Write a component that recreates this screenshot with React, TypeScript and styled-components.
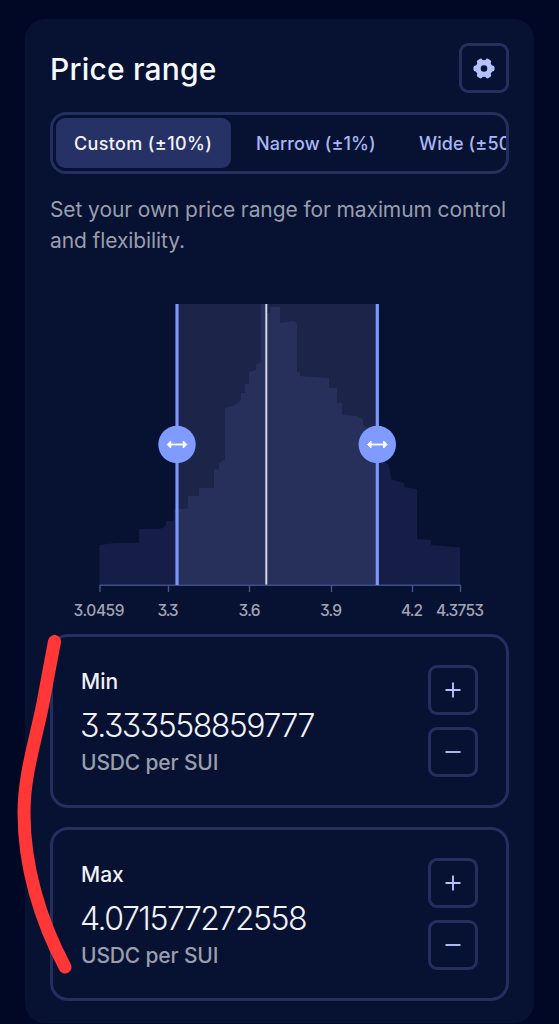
import styled, { createGlobalStyle } from "styled-components";

interface RangeFieldProps {
  label: string;
  value: string;
  unit: string;
}

interface Tick {
  x: number;
  labelX: number;
  label: string;
  width: number;
}

const GlobalStyle = createGlobalStyle`
  * {
    box-sizing: border-box;
  }

  body {
    margin: 0;
    background: #010825;
    font-family: Inter, "Open Sans", sans-serif;
    font-feature-settings: "cv09" 1;
  }
`;

const Page = styled.main`
  position: relative;
  width: 559px;
  height: 1024px;
  padding: 19px 25px 0;
  overflow: hidden;
`;

const Card = styled.section`
  display: flex;
  flex-direction: column;
  width: 509px;
  height: 1004px;
  padding: 24px 25px;
  border-radius: 20px;
  background: #071131;
`;

const Header = styled.header`
  display: flex;
  justify-content: space-between;
  align-items: center;
  height: 50px;
`;

const Title = styled.h2`
  margin: 0;
  padding-top: 2px;
  color: #f8f8ff;
  font-size: 30px;
  line-height: 40px;
  font-weight: 500;
  letter-spacing: 0.2px;
`;

const IconButton = styled.button`
  display: flex;
  justify-content: center;
  align-items: center;
  width: 50px;
  height: 50px;
  padding: 0;
  border: 3px solid #252f5f;
  border-radius: 9px;
  background: transparent;
  color: #b4c1fc;
`;

const Tabs = styled.div`
  display: flex;
  flex-shrink: 0;
  gap: 7px;
  height: 62px;
  margin-top: 19px;
  padding: 3px;
  border: 3px solid #252f5f;
  border-radius: 16px;
  overflow: hidden;
`;

const Tab = styled.button<{ $active?: boolean; $width: number }>`
  flex: 0 0 ${({ $width }) => $width}px;
  height: 50px;
  padding: 0 0 0 18px;
  border: 0;
  border-radius: 9px;
  background: ${({ $active }) => ($active ? "#263265" : "transparent")};
  color: ${({ $active }) => ($active ? "#f2f3ff" : "#a9b7f5")};
  font: 500 18px Inter, sans-serif;
  letter-spacing: ${({ $active }) => ($active ? 0.35 : 0.1)}px;
  text-align: left;
  white-space: nowrap;
`;

const Description = styled.p`
  flex-shrink: 0;
  height: 62px;
  margin: 20px 0 0;
  color: #9a9eae;
  font-size: 21px;
  line-height: 31px;
  font-weight: 400;
  letter-spacing: -0.1px;
  white-space: nowrap;
`;

const Chart = styled.svg`
  display: block;
  flex-shrink: 0;
  width: 459px;
  height: 335px;
  margin-top: 39px;
  overflow: visible;
`;

const AxisLabel = styled.text`
  fill: #a2a5b7;
  font-size: 15.5px;
  font-weight: 500;
`;

const Fields = styled.div`
  display: flex;
  flex-direction: column;
  gap: 19px;
  margin-top: 4px;
`;

const Field = styled.div`
  display: flex;
  justify-content: space-between;
  height: 174px;
  padding: 28px;
  border: 3px solid #252f5f;
  border-radius: 18px;
`;

const FieldText = styled.div`
  display: flex;
  flex-direction: column;
  white-space: nowrap;
`;

const FieldLabel = styled.span`
  height: 34px;
  color: #f1f2fa;
  font-size: 21px;
  line-height: 34px;
  font-weight: 500;
`;

const FieldValue = styled.span`
  height: 52px;
  margin-left: -1px;
  color: #f1f2fa;
  font-size: 32px;
  line-height: 54px;
  font-weight: 300;
  letter-spacing: -1.5px;
`;

const FieldUnit = styled.span`
  height: 24px;
  color: #9a9eae;
  font-size: 21px;
  line-height: 24px;
  font-weight: 500;
  letter-spacing: -0.15px;
`;

const Steppers = styled.div`
  display: flex;
  flex-direction: column;
  gap: 12px;
`;

const Marker = styled.svg`
  position: absolute;
  left: 0;
  top: 620px;
  width: 90px;
  height: 370px;
`;

const histogram =
  "M49.5 290V250L65 248H89V234L107 234L113 233L116 230V226H124V215L128 214H134L138 213V201H149V193H164V175L169 174V168L175 164V113L183 111L188 108L191 105V98H195V89H199V77L206 75V70L211 67V9H217V18H220V12H230V28L244 26L247 29V77H250V81L279 83V93H287V108H292V120L307 121L313 124V130L321 135L327 150L330 165L336 168L339 170L341 184L346 186L354 188V192L367 194V244L381 245V250L410 252.5V290Z";

const ticks: Tick[] = [
  { x: 50, labelX: 49, label: "3.0459", width: 51 },
  { x: 118.5, labelX: 118, label: "3.3", width: 21 },
  { x: 199.5, labelX: 199.5, label: "3.6", width: 22 },
  { x: 281.5, labelX: 281, label: "3.9", width: 22 },
  { x: 362.5, labelX: 362, label: "4.2", width: 22 },
  { x: 410.5, labelX: 410, label: "4.3753", width: 48 },
];

const Handle = ({ x }: { x: number }) => (
  <g transform={`translate(${x} 0)`}>
    <path d="M0 9V290" stroke="#7d98f8" strokeWidth="3.2" />
    <circle cy="149.5" r="18.7" fill="#7f9bff" />
    <path d="M-8 149.5H8" stroke="white" strokeWidth="1.8" />
    <path
      d="M-6.3 146L-9.8 149.5L-6.3 153ZM6.3 146L9.8 149.5L6.3 153Z"
      fill="white"
      stroke="white"
      strokeWidth="1"
      strokeLinejoin="round"
    />
  </g>
);

const PriceChart = () => (
  <Chart viewBox="0 0 459 335">
    <path d={histogram} fill="#161e48" />
    <rect x="127" y="9" width="200" height="281" fill="#1c2449" />
    <clipPath id="selected">
      <rect x="127" y="9" width="200" height="281" />
    </clipPath>
    <path d={histogram} fill="#272f5b" clipPath="url(#selected)" />
    <path d="M216.3 9V290" stroke="#d6d6e6" strokeWidth="2" />
    <path d="M49.5 290.2H411" stroke="#3e4c88" strokeWidth="1.6" />
    <Handle x={127} />
    <Handle x={327.3} />
    {ticks.map((tick) => (
      <g key={tick.label}>
        <path d={`M${tick.x} 290V297`} stroke="#46528a" strokeWidth="1.4" />
        <AxisLabel
          x={tick.labelX}
          y="320.5"
          textAnchor="middle"
          textLength={tick.width}
        >
          {tick.label}
        </AxisLabel>
      </g>
    ))}
  </Chart>
);

const SettingsIcon = () => (
  <svg width="22" height="22" viewBox="-11 -11.5 22 22">
    <g fill="currentColor">
      {[0, 60, 120, 180, 240, 300].map((angle) => (
        <rect
          key={angle}
          x="5"
          y="-3"
          width="5.5"
          height="6"
          rx="2"
          transform={`rotate(${angle})`}
        />
      ))}
    </g>
    <circle r="5.9" fill="none" stroke="currentColor" strokeWidth="5.2" />
  </svg>
);

const StepIcon = ({ plus }: { plus?: boolean }) => (
  <svg width="16" height="16" viewBox="0 0 16 16">
    <path
      d={plus ? "M.5 8H15.5M8 .5V15.5" : "M.5 8H15.5"}
      stroke="currentColor"
      strokeWidth="1.9"
    />
  </svg>
);

const RangeField = ({ label, value, unit }: RangeFieldProps) => (
  <Field>
    <FieldText>
      <FieldLabel>{label}</FieldLabel>
      <FieldValue>{value}</FieldValue>
      <FieldUnit>{unit}</FieldUnit>
    </FieldText>
    <Steppers>
      <IconButton aria-label={`Increase ${label}`}>
        <StepIcon plus />
      </IconButton>
      <IconButton aria-label={`Decrease ${label}`}>
        <StepIcon />
      </IconButton>
    </Steppers>
  </Field>
);

const App = () => {
  return (
    <Page>
      <GlobalStyle />
      <Card>
        <Header>
          <Title>Price range</Title>
          <IconButton aria-label="Settings">
            <SettingsIcon />
          </IconButton>
        </Header>
        <Tabs>
          <Tab $active $width={175}>
            Custom (±10%)
          </Tab>
          <Tab $width={156}>Narrow (±1%)</Tab>
          <Tab $width={170}>Wide (±50%)</Tab>
        </Tabs>
        <Description>
          Set your own price range for maximum control
          <br />
          and flexibility.
        </Description>
        <PriceChart />
        <Fields>
          <RangeField label="Min" value="3.333558859777" unit="USDC per SUI" />
          <RangeField label="Max" value="4.071577272558" unit="USDC per SUI" />
        </Fields>
      </Card>
      <Marker viewBox="0 620 90 370">
        <path
          d="M54.5 641.5C50 666 47 681 43 703C35 743 24 775 24 813C24 866 40 920 65 967"
          fill="none"
          stroke="#ff3737"
          strokeWidth="13"
          strokeLinecap="round"
        />
      </Marker>
    </Page>
  );
};

export default App;
